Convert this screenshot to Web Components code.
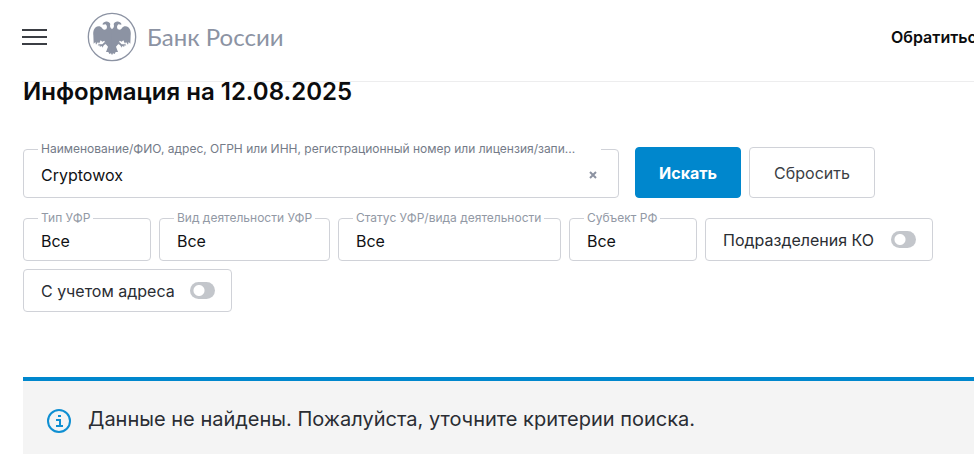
<!DOCTYPE html>
<html lang="ru">
<head>
<meta charset="utf-8">
<title>Банк России</title>
<style>
  body { margin: 0; background: #fff; color: #2a2d33; font: 16px/20px Inter, "Liberation Sans", sans-serif; overflow-x: hidden; }
</style>
</head>
<body>
<registry-page></registry-page>

<template id="header-tpl">
  <style>
    :host { display: block; margin-left: 22px; }
    header { display: flex; align-items: center; box-sizing: border-box; height: 82px; padding-bottom: 7px; border-bottom: 1px solid #ededee; }
    button { display: grid; gap: 5px; width: 25px; padding: 0; border: 0; background: none; }
    button span { height: 2px; background: #3b3e44; }
    .logo { display: flex; align-items: center; gap: 10px; margin-left: 40px; color: #8c93a3; text-decoration: none; }
    .logo svg { width: 50px; height: 50px; }
    .logo span { font: 400 24px/30px Lato, "Open Sans", sans-serif; }
    nav { width: 83px; margin-left: auto; white-space: nowrap; }
    nav a { color: #0b0c0e; font-weight: 600; text-decoration: none; }
  </style>
  <header>
    <button type="button" aria-label="Меню"><span></span><span></span><span></span></button>
    <a class="logo" href="#">
      <svg viewBox="21 22 150 150" aria-hidden="true">
        <circle cx="96" cy="97" r="71" fill="none" stroke="currentColor" stroke-width="4"/>
        <g id="half" fill="currentColor">
          <path d="M97 74C90 70 89 64 91 58C89 51 81 49 76 51C70 52 67 56 68 60L77 59C82 63 82 71 78 74C73 77 69 75 66 70C62 64 53 63 47 68C40 74 39 83 40 92L41 117L46 112L48 120L54 112L57 117L62 107L67 111L73 108L77 118L84 126L78 142L85 142L88 148L93 146L97 151Z"/>
          <path d="M74 112L67 119L56 119L53 122L61 123L58 127L66 124L67 129L72 121L79 117Z"/>
        </g>
        <use href="#half" transform="translate(192 0) scale(-1 1)"/>
      </svg>
      <span>Банк России</span>
    </a>
    <nav><a href="#">Обратиться</a></nav>
  </header>
</template>

<!-- рамка поля, подпись лежит на верхней границе -->
<template id="field-tpl">
  <style>
    :host { display: block; }
    fieldset { display: flex; align-items: center; box-sizing: border-box; height: var(--field-height, 51px); min-width: 0; margin: 0; padding: 0 17px 5px 14px; border: 1px solid #d0d2d8; border-radius: 4px; }
    legend { padding: 0 3px; font-size: 12px; line-height: 16px; color: #9299a5; white-space: nowrap; }
    label { display: block; }
    input, select { flex: 1; min-width: 0; height: 24px; margin: 0; padding: 0 3px; border: 0; outline: 0; background: none; color: #101114; font: inherit; appearance: none; }
    button { padding: 0; width: 16px; height: 16px; border: 0; background: none; color: #8c92a1; }
    button svg { display: block; margin: auto; width: 8px; height: 8px; }
    :host([kind="search"]) legend { width: 100%; box-sizing: border-box; color: #747b88; }
  </style>
  <fieldset><legend><label for="control"></label></legend></fieldset>
</template>

<template id="toggle-tpl">
  <style>
    :host { display: block; }
    label { display: flex; align-items: center; justify-content: space-between; box-sizing: border-box; height: 43px; padding: 0 16px 0 17px; border: 1px solid #d0d2d8; border-radius: 4px; white-space: nowrap; }
    input { appearance: none; flex: none; width: 25px; height: 17px; margin: 0; border-radius: 9px; background: radial-gradient(circle at 9px 50%, #fff 5px, #c3c6cb 6px); }
  </style>
  <label><slot></slot><input type="checkbox" role="switch"></label>
</template>

<template id="button-tpl">
  <style>
    :host { display: block; }
    button { width: 100%; height: 51px; padding: 0; border: 1px solid #d0d2d8; border-radius: 4px; background: #fff; color: #3b3e44; font: inherit; }
    :host([primary]) button { border-color: #0087cd; background: #0087cd; color: #fff; font-weight: 700; }
  </style>
  <button type="button"><slot></slot></button>
</template>

<template id="notice-tpl">
  <style>
    :host { display: flex; align-items: center; gap: 16px; box-sizing: border-box; height: 77px; padding: 6px 24px 0 23px; border-top: 4px solid #0087cd; background: #f4f4f4; }
    svg { flex: none; width: 26px; height: 26px; }
    p { margin: 0 0 4px; font-size: 20px; line-height: 28px; }
  </style>
  <svg viewBox="0 0 26 26" fill="none" stroke="#0f8fd2" stroke-width="2" aria-hidden="true">
    <circle cx="13" cy="13" r="11"/>
    <path d="M10 12H14V18M10 18H17M12 8H15"/>
  </svg>
  <p><slot></slot></p>
</template>

<template id="page-tpl">
  <style>
    :host { display: block; }
    main { padding: 0 0 4px 23px; }
    h1 { margin: 0 0 39px; color: #0b0c0e; font-size: 24px; line-height: 20px; font-weight: 600; }
    .search, .filters { display: flex; align-items: flex-end; gap: 8px; }
    .search { margin-bottom: 12px; padding-right: 99px; }
    .search ui-field { flex: 1; min-width: 0; margin-right: 8px; --field-height: 57px; }
    .filters { flex-wrap: wrap; margin-bottom: 65px; }
    .short { width: 128px; }
    .find { width: 106px; }
    .reset { width: 126px; }
    .kind { width: 171px; }
    .status { width: 223px; }
    .units { width: 228px; }
    .address { width: 209px; }
  </style>
  <site-header></site-header>
  <main>
    <h1>Информация на 12.08.2025</h1>
    <div class="search">
      <ui-field kind="search" label="Наименование/ФИО, адрес, ОГРН или ИНН, регистрационный номер или лицензия/запи..." value="Cryptowox"></ui-field>
      <ui-button class="find" primary>Искать</ui-button>
      <ui-button class="reset">Сбросить</ui-button>
    </div>
    <div class="filters">
      <ui-field class="short" label="Тип УФР" value="Все"></ui-field>
      <ui-field class="kind" label="Вид деятельности УФР" value="Все"></ui-field>
      <ui-field class="status" label="Статус УФР/вида деятельности" value="Все"></ui-field>
      <ui-field class="short" label="Субъект РФ" value="Все"></ui-field>
      <ui-toggle class="units">Подразделения КО</ui-toggle>
      <ui-toggle class="address">С учетом адреса</ui-toggle>
    </div>
    <ui-notice>Данные не найдены. Пожалуйста, уточните критерии поиска.</ui-notice>
  </main>
</template>

<script>
  class TemplateElement extends HTMLElement {
    connectedCallback() {
      if (this.shadowRoot) return;
      this.attachShadow({mode : 'open'});
      this.shadowRoot.append(document.getElementById(this.constructor.template).content.cloneNode(true));
      this.fill();
    }
    fill() {}
  }

  class SiteHeader extends TemplateElement { static template = 'header-tpl'; }
  class UiToggle extends TemplateElement { static template = 'toggle-tpl'; }
  class UiButton extends TemplateElement { static template = 'button-tpl'; }
  class UiNotice extends TemplateElement { static template = 'notice-tpl'; }
  class RegistryPage extends TemplateElement { static template = 'page-tpl'; }

  class UiField extends TemplateElement {
    static template = 'field-tpl';
    fill() {
      const box = this.shadowRoot.querySelector('fieldset');
      this.shadowRoot.querySelector('label').textContent = this.getAttribute('label');
      if (this.getAttribute('kind') === 'search') {
        box.insertAdjacentHTML('beforeend', `<input id="control" type="text">
          <button type="button" aria-label="Очистить"><svg viewBox="0 0 8 8" stroke="currentColor" stroke-width="2"><path d="M1 1L7 7M7 1L1 7"/></svg></button>`);
        const input = box.querySelector('input');
        input.value = this.getAttribute('value');
        box.querySelector('button').addEventListener('click', function(){
          input.value = '';
          input.focus();
        });
      } else {
        box.insertAdjacentHTML('beforeend', '<select id="control"><option></option></select>');
        box.querySelector('option').textContent = this.getAttribute('value');
      }
    }
  }

  customElements.define('site-header', SiteHeader);
  customElements.define('ui-field', UiField);
  customElements.define('ui-toggle', UiToggle);
  customElements.define('ui-button', UiButton);
  customElements.define('ui-notice', UiNotice);
  customElements.define('registry-page', RegistryPage);
</script>
</body>
</html>
